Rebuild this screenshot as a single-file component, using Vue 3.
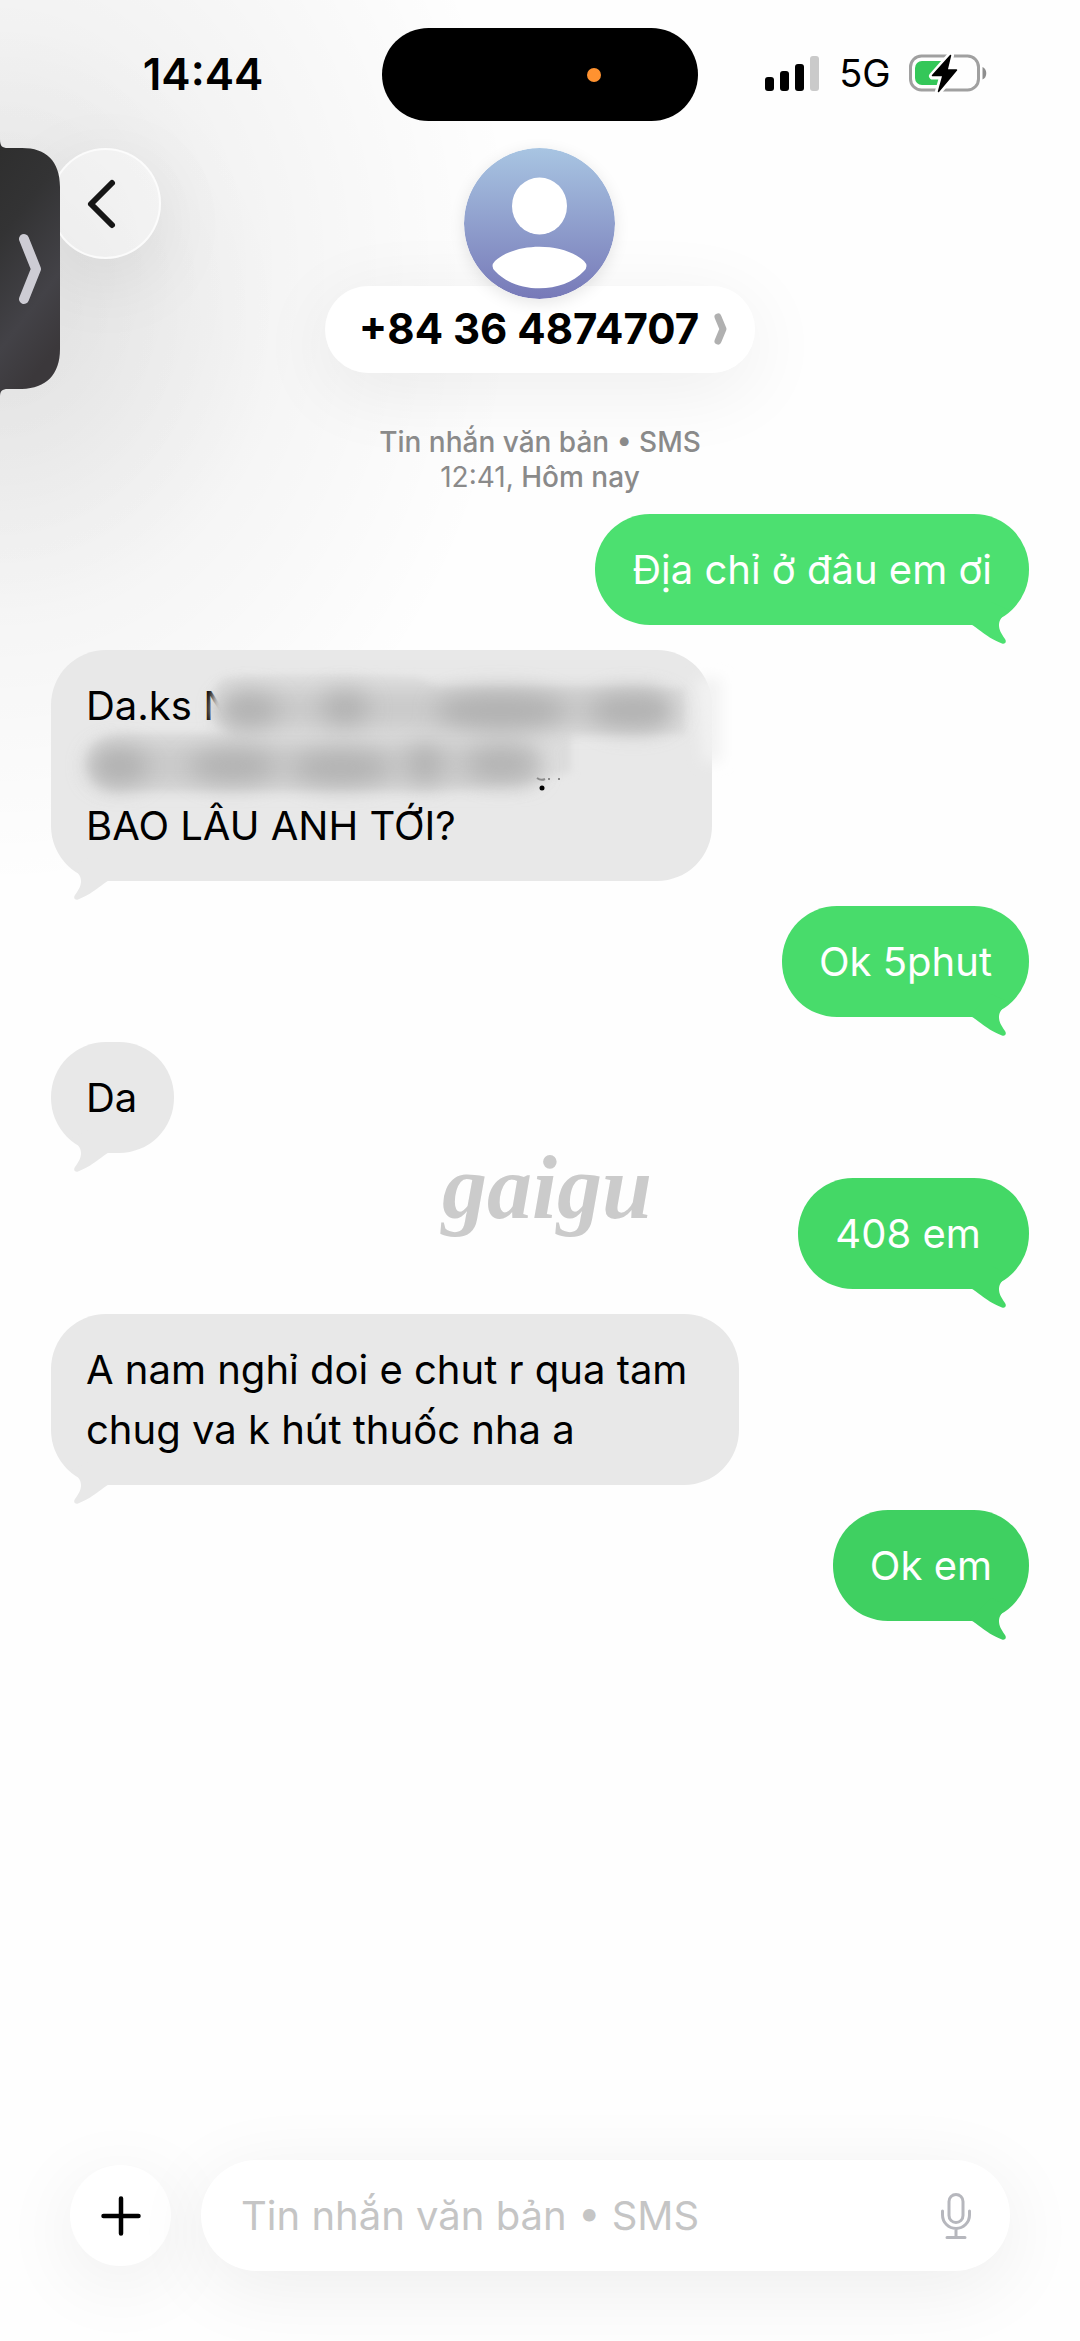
<script setup>
import { ref } from 'vue'

const draft = ref('')

const messages = [
  { id: 1, mine: true, tone: 'g1', text: 'Địa chỉ ở đâu em ơi' },
  { id: 2, mine: false, redacted: true, text: 'Da.ks N\n\nBAO LÂU ANH TỚI?' },
  { id: 3, mine: true, tone: 'g2', text: 'Ok 5phut' },
  { id: 4, mine: false, text: 'Da' },
  { id: 5, mine: true, tone: 'g3', text: '408 em ' },
  { id: 6, mine: false, multiline: true, text: 'A nam nghỉ doi e chut r qua tam\nchug va k hút thuốc nha a' },
  { id: 7, mine: true, tone: 'g4', text: 'Ok em' },
]
</script>

<template>
  <div class="screen">
    <div class="status">
      <time class="clock">14:44</time>
      <div class="island"><span class="rec"></span></div>
      <div class="radios">
        <svg class="signal" width="56" height="36" viewBox="0 0 56 36" aria-hidden="true">
          <rect x="0" y="22" width="9" height="14" rx="3" />
          <rect x="15" y="16" width="9" height="20" rx="3" />
          <rect x="30" y="9" width="9" height="27" rx="3" />
          <rect x="45" y="1" width="9" height="35" rx="3" fill="#cacaca" />
        </svg>
        <span class="net">5G</span>
        <svg class="battery" width="80" height="40" viewBox="0 0 80 40" aria-hidden="true">
          <rect x="1.5" y="3" width="68" height="34" rx="11" fill="none" stroke="#a0a0a0" stroke-width="3" />
          <path d="M73.5 14c5 1.500 5 11 0 12.500z" fill="#8e8e8e" />
          <path d="M13 8h22v24h-22a7 7 0 0 1-7-7v-10a7 7 0 0 1 7-7z" fill="#34c759" />
          <path d="M41.500 2.500L23.500 23h10.500L29.500 38.500L47.500 17h-10z" fill="#000" stroke="#fff" stroke-width="7" stroke-linejoin="round" />
          <path d="M41.500 2.500L23.500 22.500h10.500L29.500 38.500L47.500 17h-9.500z" fill="#000" stroke="#000" stroke-width="1.500" stroke-linejoin="round" />
        </svg>
      </div>
    </div>

    <header class="header">
      <button class="back" type="button" aria-label="Back">
        <svg width="32" height="52" viewBox="0 0 32 52" aria-hidden="true">
          <path d="M27 5L6 26L27 47" fill="none" stroke="#161616" stroke-width="6" stroke-linecap="round" stroke-linejoin="round" />
        </svg>
      </button>
      <div class="contact">
        <svg class="avatar" width="151" height="151" viewBox="0 0 151 151" aria-hidden="true">
          <defs>
            <linearGradient id="sky" x1="0" y1="0" x2="0" y2="1">
              <stop offset="0" stop-color="#a8c5e2" />
              <stop offset="1" stop-color="#7779b8" />
            </linearGradient>
          </defs>
          <circle cx="75.500" cy="75.500" r="75.500" fill="url(#sky)" />
          <ellipse cx="75.500" cy="58" rx="27.500" ry="28.500" fill="#fff" />
          <path d="M31 113C52 94 99 94 120 113Q125 118 120 123C99 146 52 146 31 123Q26 118 31 113Z" fill="#fff" />
        </svg>
        <button class="name" type="button">
          <span>+84 36 4874707</span>
          <svg width="16" height="34" viewBox="0 0 16 34" aria-hidden="true">
            <path d="M5 5L10 17L5 29" fill="none" stroke="#b0b0b0" stroke-width="7" stroke-linecap="round" stroke-linejoin="round" />
          </svg>
        </button>
      </div>
    </header>

    <div class="drawer" aria-hidden="true">
      <svg width="60" height="258" viewBox="0 0 60 258">
        <defs>
          <linearGradient id="slate" x1="0" y1="0" x2="0.300" y2="1">
            <stop offset="0" stop-color="#2e2e2e" />
            <stop offset="0.350" stop-color="#333334" />
            <stop offset="0.750" stop-color="#434247" />
            <stop offset="1" stop-color="#3b383b" />
          </linearGradient>
        </defs>
        <path d="M0 0C0 7 2 9 8 9H22C46 9 60 22 60 48V210C60 236 46 249 22 250H8C2 250 0 252 0 258Z" fill="url(#slate)" />
        <path d="M24 100L36 130L24 160" fill="none" stroke="#cdccd4" stroke-width="10" stroke-linecap="round" stroke-linejoin="round" />
      </svg>
    </div>

    <p class="meta"><span>Tin nhắn văn bản • SMS</span><span><span class="hour">12:41,</span> Hôm nay</span></p>

    <main class="thread">
      <div
        v-for="m in messages"
        :key="m.id"
        class="bubble"
        :class="[m.mine ? 'mine' : 'theirs', m.tone, { redacted: m.redacted, multiline: m.multiline }]"
      >
        <svg class="tail" width="60" height="50" viewBox="0 0 60 50" aria-hidden="true">
          <path d="M8 27C15 28 22 39 41 46.500C44 47.500 46 45 44 42C40 36 38 33 38 28C38 22 42 19 48 13L30 5Z" fill="currentColor" />
        </svg>
        <span class="text">{{ m.text }}</span>
        <svg v-if="m.redacted" class="smear" width="700" height="170" viewBox="0 0 700 170" aria-hidden="true">
          <defs>
            <filter id="fade" x="-60%" y="-30%" width="220%" height="160%"><feGaussianBlur stdDeviation="7" /></filter>
            <filter id="edge" x="-10%" y="-20%" width="120%" height="140%"><feGaussianBlur stdDeviation="4" /></filter>
            <filter id="band" x="-10%" y="-60%" width="120%" height="220%"><feGaussianBlur stdDeviation="9" /></filter>
            <filter id="soft" x="-30%" y="-60%" width="160%" height="220%"><feGaussianBlur stdDeviation="12" /></filter>
          </defs>
          <path d="M646 28H670V112H652Z" fill="#f2f2f2" filter="url(#fade)" />
          <g filter="url(#edge)">
            <path d="M172 28Q280 22 366 28L390 38H634V84H520V122Q440 142 330 141H64Q38 138 36 112Q38 86 72 84H182Q160 76 160 60Q161 38 172 28Z" fill="#dcdcdc" />
          </g>
          <g filter="url(#band)" fill="#cbcbcb">
            <rect x="172" y="40" width="446" height="38" rx="18" />
            <rect x="42" y="94" width="450" height="42" rx="20" />
          </g>
          <g filter="url(#soft)" fill="#a4a4a4" opacity="0.65">
            <ellipse cx="198" cy="60" rx="30" ry="18" />
            <ellipse cx="294" cy="58" rx="24" ry="18" />
            <ellipse cx="450" cy="61" rx="66" ry="20" />
            <ellipse cx="582" cy="61" rx="44" ry="19" />
            <ellipse cx="68" cy="116" rx="30" ry="20" />
            <ellipse cx="182" cy="116" rx="44" ry="17" />
            <ellipse cx="290" cy="118" rx="50" ry="17" />
            <ellipse cx="374" cy="114" rx="18" ry="20" />
            <ellipse cx="450" cy="114" rx="36" ry="16" />
          </g>
          <path d="M486 128q4 3 8 1M498 130v-2M508 130v-2" fill="none" stroke="#8a8a8a" stroke-width="2" />
          <circle cx="491" cy="138" r="2.500" fill="#000" />
        </svg>
      </div>
      <div class="mark">gaigu</div>
    </main>

    <form class="composer" @submit.prevent>
      <button class="plus" type="button" aria-label="Add">
        <svg width="44" height="44" viewBox="0 0 44 44" aria-hidden="true">
          <path d="M22 4.500V39.500M4.500 22H39.500" stroke="#000" stroke-width="4.500" stroke-linecap="round" />
        </svg>
      </button>
      <div class="field">
        <input v-model="draft" type="text" aria-label="Tin nhắn văn bản" placeholder="Tin nhắn văn bản • SMS" />
        <button class="mic" type="button" aria-label="Dictate">
          <svg width="32" height="48" viewBox="0 0 32 48" fill="none" stroke="#b6b7bd" stroke-width="3" stroke-linecap="round" aria-hidden="true">
            <rect x="9" y="2.500" width="14" height="28" rx="7" />
            <path d="M2.500 19v4a13.500 13.500 0 0 0 27 0v-4M16 37v8M7 45.500h18" />
          </svg>
        </button>
      </div>
    </form>
  </div>
</template>

<style>
body {
  margin: 0;
  background: #fefefe;
}
</style>

<style scoped>
.screen {
  position: relative;
  display: flex;
  flex-direction: column;
  min-height: 100vh;
  overflow: hidden;
  box-sizing: border-box;
  font-family: Inter, "Liberation Sans", sans-serif;
  color: #000;
  background:
    radial-gradient(ellipse 280px 300px at 0 320px, rgba(0, 0, 0, 0.05), transparent),
    radial-gradient(ellipse 520px 620px at 0 270px, rgba(0, 0, 0, 0.08), rgba(0, 0, 0, 0.03) 60%, transparent),
    #fefefe;
}
button {
  border: 0;
  padding: 0;
  color: inherit;
  font: inherit;
  background: none;
}
svg {
  display: block;
  flex: none;
}
.status {
  display: grid;
  grid-template-columns: 1fr 316px 1fr;
  align-items: center;
  padding-top: 28px;
}
.clock {
  justify-self: center;
  padding: 0 0 2px 24px;
  font-size: 44px;
  font-weight: 600;
  line-height: 60px;
}
.island {
  display: flex;
  align-items: center;
  justify-content: flex-end;
  height: 93px;
  padding-right: 97px;
  box-sizing: border-box;
  border-radius: 47px;
  background: #000;
}
.rec {
  width: 14px;
  height: 14px;
  border-radius: 50%;
  background: #ff9230;
}
.radios {
  display: flex;
  align-items: center;
  justify-content: center;
  gap: 18px;
  padding: 0 24px 3px 0;
}
.net {
  font-size: 38px;
  line-height: 48px;
}
.header {
  display: grid;
  grid-template-columns: 1fr auto 1fr;
  align-items: start;
  padding-top: 27px;
}
.back {
  display: flex;
  align-items: center;
  justify-content: center;
  justify-self: start;
  width: 111px;
  height: 111px;
  margin-left: 50px;
  padding-right: 10px;
  box-sizing: border-box;
  border: 2px solid rgba(255, 255, 255, 0.7);
  border-radius: 50%;
  background: rgba(255, 255, 255, 0.35);
  box-shadow: 0 20px 80px rgba(0, 0, 0, 0.08);
}
.contact {
  display: flex;
  flex-direction: column;
  align-items: center;
}
.avatar {
  position: relative;
  z-index: 1;
  border-radius: 50%;
  box-shadow: 0 4px 16px rgba(0, 0, 0, 0.1);
}
.name {
  display: flex;
  align-items: center;
  gap: 14px;
  height: 87px;
  margin-top: -13px;
  padding: 0 26px 2px 34px;
  box-sizing: border-box;
  border-radius: 44px;
  font-size: 42px;
  font-weight: 700;
  white-space: nowrap;
  background: rgba(255, 255, 255, 0.9);
  box-shadow: 0 16px 80px rgba(0, 0, 0, 0.07);
}
.drawer {
  position: absolute;
  top: 139px;
  left: 0;
}
.meta {
  display: flex;
  flex-direction: column;
  align-items: center;
  margin: 52px 0 18px;
  font-size: 28px;
  font-weight: 500;
  line-height: 35px;
  color: #8a8a8a;
}
.hour {
  font-weight: 400;
}
.thread {
  position: relative;
  display: flex;
  flex-direction: column;
  gap: 25px;
  padding: 1px 51px 0;
}
.bubble {
  position: relative;
  max-width: 720px;
  padding: 26px 37px 25px;
  box-sizing: border-box;
  border-radius: 55px;
  font-size: 40px;
  line-height: 60px;
}
.text {
  position: relative;
  display: block;
  color: #000;
  white-space: pre-wrap;
}
.mine {
  align-self: flex-end;
  background: currentColor;
}
.mine .text {
  color: #fff;
}
.theirs {
  align-self: flex-start;
  padding-left: 35px;
  color: #e8e8e8;
  background: currentColor;
}
.g1 { color: #4ce070; }
.g2 { color: #48dc6b; }
.g3 { color: #44d866; }
.g4 { color: #3fd061; }
.redacted {
  width: 661px;
}
.multiline {
  padding-right: 52px;
}
.tail {
  position: absolute;
  right: 8px;
  bottom: -22px;
}
.theirs .tail {
  right: auto;
  left: 8px;
  transform: scaleX(-1);
}
.smear {
  position: absolute;
  top: 0;
  left: 0;
}
.mark {
  position: absolute;
  top: 625px;
  left: 50%;
  margin-left: -98px;
  font-family: "Liberation Serif", serif;
  font-size: 90px;
  font-style: italic;
  font-weight: 700;
  line-height: 100px;
  color: #cbcbcb;
}
.composer {
  display: flex;
  align-items: center;
  gap: 30px;
  margin-top: auto;
  padding: 60px 70px 70px;
}
.plus {
  display: flex;
  flex: none;
  align-items: center;
  justify-content: center;
  width: 101px;
  height: 101px;
  border-radius: 50%;
  background: #fff;
  box-shadow: 0 16px 80px rgba(0, 0, 0, 0.07);
}
.field {
  display: flex;
  flex: 1;
  align-items: center;
  height: 111px;
  padding: 0 38px 0 40px;
  box-sizing: border-box;
  border-radius: 56px;
  background: #fff;
  box-shadow: 0 16px 80px rgba(0, 0, 0, 0.07);
}
.field input {
  flex: 1;
  min-width: 0;
  height: 60px;
  padding: 0;
  border: 0;
  outline: 0;
  font: inherit;
  font-size: 40px;
  background: transparent;
}
.field input::placeholder {
  color: #c5c5c5;
  opacity: 1;
}
</style>
